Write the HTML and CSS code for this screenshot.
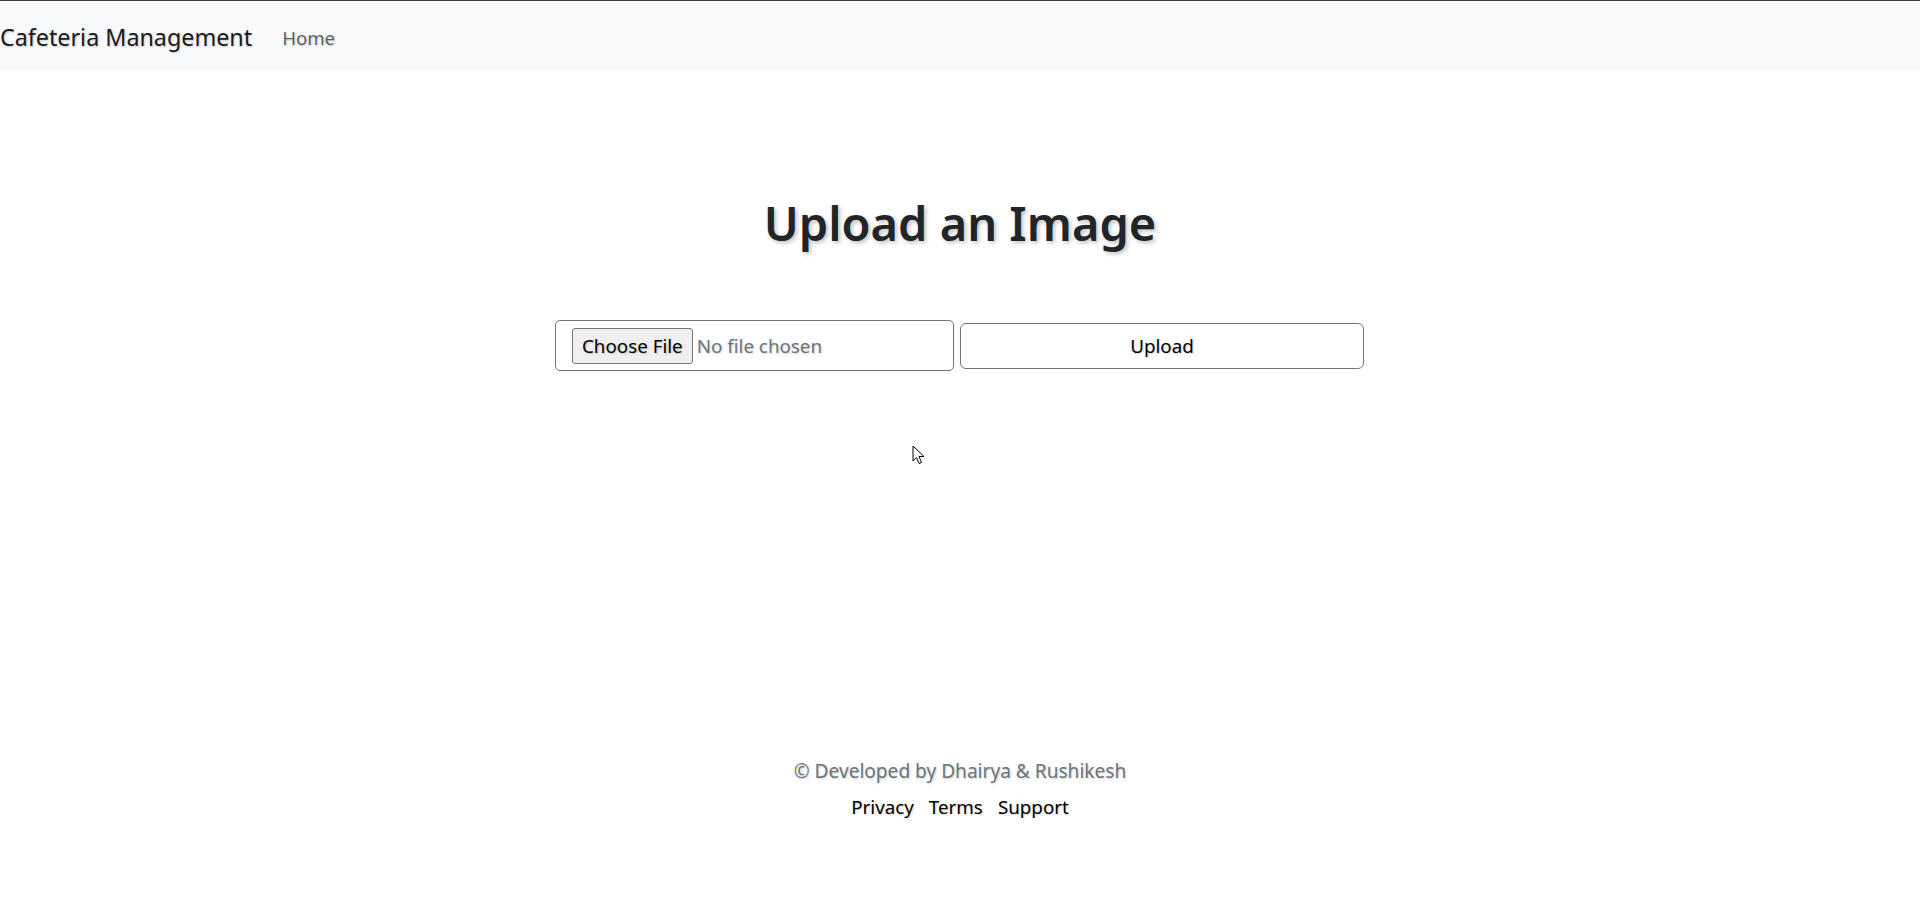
FILE: index.html
```html
<!DOCTYPE html>
<html lang="en">
<head>
<meta charset="utf-8">
<title>Cafeteria Management</title>
<link rel="stylesheet" href="styles.css">
</head>
<body>
<div class="topline"></div>
<nav class="navbar">
  <a class="brand" href="#">Cafeteria Management</a>
  <a class="nav-link" href="#">Home</a>
</nav>
<main class="main">
  <h1 class="title">Upload an Image</h1>
  <form class="upload-form">
    <div class="file-box">
      <span class="file-btn">Choose File</span>
      <span class="file-name">No file chosen</span>
    </div>
    <button type="button" class="upload-btn">Upload</button>
  </form>
</main>
<footer class="footer">
  <p class="credit">© Developed by Dhairya &amp; Rushikesh</p>
  <div class="links">
    <a href="#">Privacy</a>
    <a href="#">Terms</a>
    <a href="#">Support</a>
  </div>
</footer>
<svg class="cursor" width="14" height="22" viewBox="0 0 14 22"><path d="M1 1 L1 16 L4.5 12.5 L7 18.5 L9.5 17.5 L7 11.5 L12 11.5 Z" fill="#fff" stroke="#000" stroke-width="1" stroke-linejoin="miter"/></svg>
</body>
</html>
```
FILE: styles.css
```css
* { box-sizing: border-box; }
html, body { margin: 0; padding: 0; }
body {
  font-family: "Segoe UI", "Noto Sans", "Open Sans", sans-serif;
  color: #212529;
  background: #fff;
  position: relative;
  min-height: 911px;
  text-shadow: 1px 1px 2px rgba(0,0,0,0.2);
}
a { text-decoration: none; }
.topline { height: 1px; background: #3c3c3c; }
.navbar {
  height: 69px;
  background: #f8f9fa;
  display: flex;
  align-items: center;
  padding-top: 4px;
}
.brand {
  font-size: 23.3px;
  color: rgba(0,0,0,0.9);
  margin-right: 20px;
  line-height: 1.5;
}
.nav-link {
  font-size: 18.6px;
  color: rgba(0,0,0,0.6);
  padding: 0 10px;
}
.main {
  display: flex;
  flex-direction: column;
  align-items: center;
  padding-top: 123px;
}
.title {
  margin: 0;
  font-size: 47px;
  font-weight: 600;
  line-height: 60px;
  height: 60px;
  text-shadow: 2px 2px 4px rgba(0,0,0,0.25);
}
.upload-form {
  margin-top: 67px;
  display: flex;
  align-items: center;
  gap: 6px;
  margin-left: -1px;
}
.file-box {
  width: 399px;
  height: 51px;
  border: 1px solid #70767b;
  border-radius: 5px;
  display: flex;
  align-items: center;
  padding-left: 16px;
}
.file-btn {
  height: 36px;
  padding: 0 9px;
  display: flex;
  align-items: center;
  background: #efefef;
  border: 1px solid #767676;
  border-radius: 3px;
  color: #000;
  font-size: 18.8px;
  margin-right: 4px;
}
.file-name {
  color: #6c757d;
  font-size: 18.8px;
}
.upload-btn {
  width: 404px;
  height: 46px;
  background: #fff;
  border: 1px solid #70767b;
  border-radius: 6px;
  font-family: inherit;
  font-size: 18.8px;
  color: #000;
  text-shadow: 1px 1px 2px rgba(0,0,0,0.2);
}
.footer {
  margin-top: 385px;
  text-align: center;
}
.credit {
  margin: 0;
  font-size: 19.1px;
  line-height: 30px;
  color: #6c757d;
}
.links {
  margin-top: 6px;
  display: flex;
  justify-content: center;
  gap: 15px;
  line-height: 30px;
}
.links a {
  font-size: 18.8px;
  color: #000;
}
.cursor {
  position: absolute;
  left: 912px;
  top: 445px;
}
```
